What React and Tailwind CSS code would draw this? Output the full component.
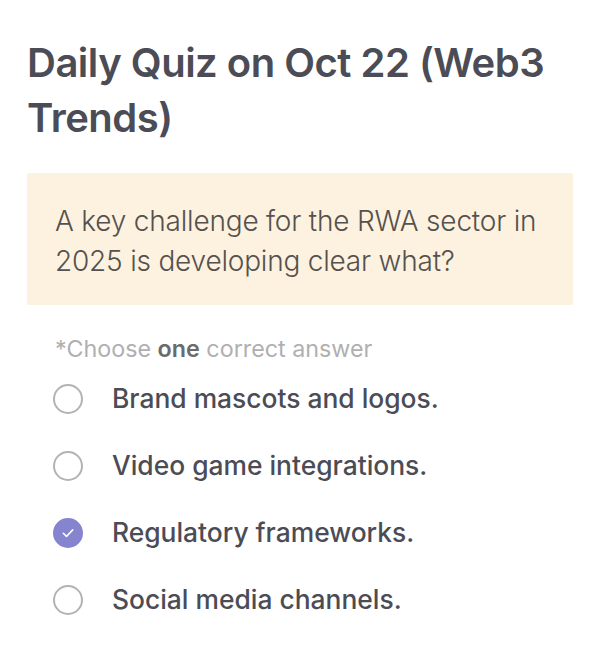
import React from "react";

const options = [
  { label: "Brand mascots and logos.", checked: false },
  { label: "Video game integrations.", checked: false },
  { label: "Regulatory frameworks.", checked: true },
  { label: "Social media channels.", checked: false },
];

function Radio({ checked }) {
  if (checked) {
    return (
      <div className="w-[30px] h-[30px] rounded-full bg-[#8584cf] flex items-center justify-center shrink-0">
        <svg width="18" height="18" viewBox="0 0 16 16" fill="none">
          <path d="M3.8 8.2l2.9 2.8 5.5-5.8" stroke="white" strokeWidth="1.4" strokeLinecap="round" strokeLinejoin="round" />
        </svg>
      </div>
    );
  }
  return <div className="w-[30px] h-[30px] rounded-full border-2 border-[#b3b3b3] bg-white shrink-0" />;
}

export default function App() {
  return (
    <div className="w-[600px] h-[671px] bg-white px-[27px] pt-[35px]" style={{ fontFamily: "Inter, 'Noto Sans', sans-serif" }}>
      <h1 className="text-[40px] leading-[55px] font-semibold text-[#4b4c55] tracking-[-0.5px]">
        Daily Quiz on Oct 22 (Web3 Trends)
      </h1>
      <div className="mt-[28px] bg-[#fdf2e0] rounded-[2px] pl-[28px] pr-[20px] pt-[28px] pb-[24px]">
        <p className="text-[28px] leading-[40px] font-light text-[#55514e] tracking-[-0.2px]">
          A key challenge for the RWA sector in 2025 is developing clear what?
        </p>
      </div>
      <p className="mt-[30px] mb-[2px] pl-[28px] text-[23.3px] leading-[28px] text-[#b0b0b0]">
        *Choose <span className="font-semibold text-[#6b6b6b]">one</span> correct answer
      </p>
      <div className="flex flex-col">
        {options.map((o) => (
          <div key={o.label} className="h-[67px] flex items-center pl-[26px] gap-[29px]">
            <Radio checked={o.checked} />
            <span className="text-[26.4px] font-medium text-[#4b4c55]">{o.label}</span>
          </div>
        ))}
      </div>
    </div>
  );
}
